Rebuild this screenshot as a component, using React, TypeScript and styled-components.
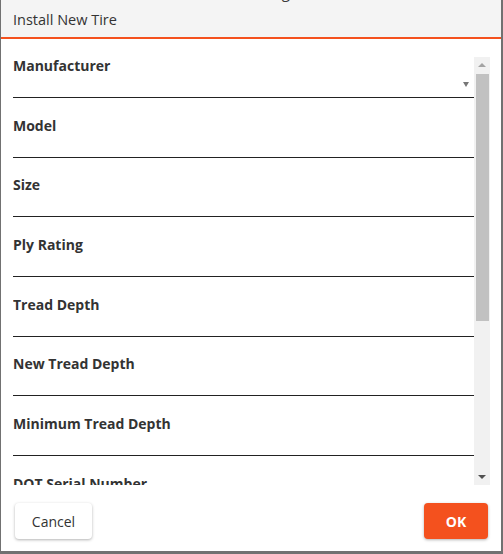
import React from "react";
import styled, { createGlobalStyle } from "styled-components";

const GlobalStyle = createGlobalStyle`
  html, body {
    margin: 0;
    padding: 0;
    background: #717171;
    font-family: "Open Sans", "Liberation Sans", sans-serif;
  }
`;

const Frame = styled.div`
  padding: 0 2px 3px 1px;
  width: 500px;
`;

const Dialog = styled.div`
  display: flex;
  flex-direction: column;
  width: 500px;
  height: 551px;
  background: #fff;
`;

const Header = styled.div`
  position: relative;
  display: flex;
  align-items: center;
  height: 37px;
  padding-left: 12px;
  background: #f4f4f4;
  border-bottom: 2px solid #f4511e;
  overflow: hidden;
`;

const Title = styled.div`
  font-size: 14.5px;
  color: #333;
  padding-top: 1px;
`;

const Ghost = styled.div`
  position: absolute;
  top: -18px;
  left: 173px;
  font-size: 15px;
  line-height: 20px;
  color: #3a3a3a;
  white-space: nowrap;
`;

const Body = styled.div`
  display: flex;
  height: 428px;
  padding: 18px 11px 0 12px;
`;

const Fields = styled.div`
  flex: 1;
  overflow: hidden;
`;

const Field = styled.div`
  display: flex;
  flex-direction: column;
  margin-bottom: 18.67px;
`;

const Label = styled.label`
  height: 19px;
  font-size: 14px;
  font-weight: 700;
  line-height: 17px;
  color: #333;
`;

const Input = styled.div`
  position: relative;
  height: 21px;
  border-bottom: 1px solid #222;
`;

const Caret = styled.span`
  position: absolute;
  right: 5px;
  top: 6px;
  width: 0;
  height: 0;
  border-left: 3.5px solid transparent;
  border-right: 3.5px solid transparent;
  border-top: 5px solid #777;
`;

const Scrollbar = styled.div`
  display: flex;
  flex-direction: column;
  width: 16px;
  background: #f1f1f1;
`;

const ScrollButton = styled.div<{ $down?: boolean }>`
  display: flex;
  align-items: center;
  justify-content: center;
  height: 16px;
  &::after {
    content: "";
    border-left: 4px solid transparent;
    border-right: 4px solid transparent;
    ${(p) =>
      p.$down
        ? "border-top: 4px solid #505050;"
        : "border-bottom: 4px solid #a3a3a3;"}
  }
`;

const Thumb = styled.div`
  height: 247px;
  margin: 1px 1px 0 2px;
  background: #c1c1c1;
`;

const Spacer = styled.div`
  flex: 1;
`;

const Footer = styled.div`
  display: flex;
  justify-content: space-between;
  align-items: flex-start;
  height: 66px;
  padding: 18px 13px 0 14px;
  box-sizing: border-box;
`;

const Button = styled.button<{ $primary?: boolean; $w: number }>`
  width: ${(p) => p.$w}px;
  height: 36px;
  padding: 0;
  border: none;
  border-radius: 4px;
  font-family: inherit;
  font-size: 14px;
  font-weight: ${(p) => (p.$primary ? 700 : 400)};
  color: ${(p) => (p.$primary ? "#fff" : "#333")};
  background: ${(p) => (p.$primary ? "#f4511e" : "#fff")};
  box-shadow: 0 1px 3px rgba(0, 0, 0, 0.3);
  cursor: pointer;
`;

const fields = [
  { label: "Manufacturer", select: true },
  { label: "Model" },
  { label: "Size" },
  { label: "Ply Rating" },
  { label: "Tread Depth" },
  { label: "New Tread Depth" },
  { label: "Minimum Tread Depth" },
  { label: "DOT Serial Number" },
];

export default function App() {
  return (
    <>
      <GlobalStyle />
      <Frame>
        <Dialog>
          <Header>
            <Ghost>-&nbsp;&nbsp;&nbsp;Install Existing Tire</Ghost>
            <Title>Install New Tire</Title>
          </Header>
          <Body>
            <Fields>
              {fields.map((f) => (
                <Field key={f.label}>
                  <Label>{f.label}</Label>
                  <Input>{f.select && <Caret />}</Input>
                </Field>
              ))}
            </Fields>
            <Scrollbar>
              <ScrollButton />
              <Thumb />
              <Spacer />
              <ScrollButton $down />
            </Scrollbar>
          </Body>
          <Footer>
            <Button $w={77}>Cancel</Button>
            <Button $primary $w={64}>OK</Button>
          </Footer>
        </Dialog>
      </Frame>
    </>
  );
}
